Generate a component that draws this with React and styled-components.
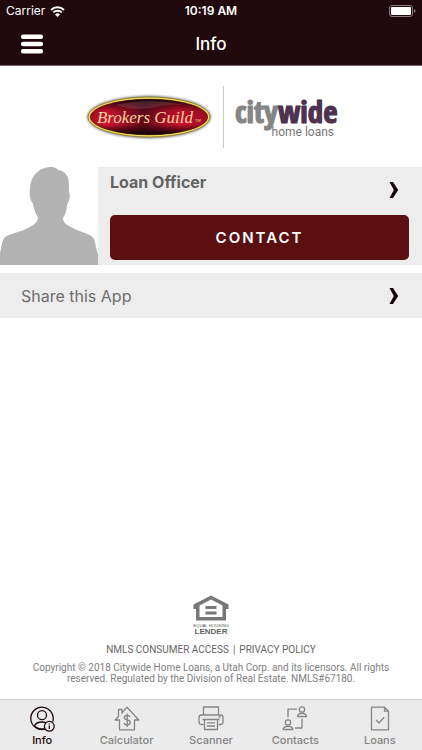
import React from "react";
import styled, { createGlobalStyle } from "styled-components";

const Global = createGlobalStyle`
  *, *::before, *::after { box-sizing: border-box; }
  body {
    margin: 0;
    background: #fff;
    font-family: Inter, "Liberation Sans", sans-serif;
  }
  button { font: inherit; color: inherit; cursor: pointer; }
`;

const Screen = styled.div`
  min-height: 100vh;
  display: flex;
  flex-direction: column;
  background: #fff;
`;

const Header = styled.header`
  background: #20090c;
  color: #fff;
  border-bottom: 1px solid #7b6b6d;
`;

const StatusBar = styled.div`
  display: grid;
  grid-template-columns: 1fr auto 1fr;
  align-items: center;
  height: 22px;
  padding: 0 6px;
  font-size: 12px;
  line-height: 22px;
`;

const Carrier = styled.div`
  display: flex;
  align-items: center;
  gap: 5px;
`;

const Clock = styled.time`
  font-weight: 600;
`;

const Battery = styled.svg`
  justify-self: end;
`;

const NavBar = styled.div`
  display: grid;
  grid-template-columns: 1fr auto 1fr;
  align-items: center;
  height: 43px;
  padding: 0 20px;
`;

const MenuButton = styled.button`
  justify-self: start;
  display: flex;
  padding: 0;
  border: 0;
  background: none;
`;

const Title = styled.h1`
  margin: 0;
  font-size: 17px;
  line-height: 22px;
  font-weight: 500;
`;

const Main = styled.main`
  flex: 1;
  display: flex;
  flex-direction: column;
`;

const Brands = styled.div`
  display: flex;
  justify-content: center;
  align-items: center;
  gap: 10px;
  height: 101px;
`;

const Divider = styled.span`
  width: 1px;
  height: 62px;
  background: #c9c9c9;
`;

const OfficerCard = styled.section`
  display: flex;
  background: #ededed;
`;

const Avatar = styled.svg`
  flex: none;
  display: block;
  background: #fff;
`;

const OfficerBody = styled.div`
  flex: 1;
  display: flex;
  flex-direction: column;
  justify-content: space-between;
  padding: 3px 13px 5px 12px;
`;

const OfficerLink = styled.a`
  display: flex;
  justify-content: space-between;
  padding-right: 10px;
  color: #646464;
  font-size: 16px;
  line-height: 24px;
  font-weight: 700;
  text-decoration: none;
`;

const CardChevron = styled.span`
  display: flex;
  padding-top: 11px;
`;

const ContactButton = styled.button`
  height: 45px;
  border: 0;
  border-radius: 5px;
  background: #5a0f11;
  && {
    color: #fff;
    font-size: 15px;
    font-weight: 600;
    letter-spacing: 2px;
  }
`;

const ShareRow = styled.button`
  display: flex;
  align-items: center;
  justify-content: space-between;
  height: 45px;
  margin-top: 8px;
  padding: 0 23px 0 21px;
  border: 0;
  background: #ededed;
  && {
    color: #6e6e6e;
    font-size: 16px;
  }
`;

const Footer = styled.footer`
  display: flex;
  flex-direction: column;
  align-items: center;
  margin-top: auto;
  padding: 0 24px 15px;
  color: #808080;
  font-family: Roboto, "Liberation Sans", sans-serif;
  text-align: center;
`;

const LegalLinks = styled.nav`
  display: flex;
  gap: 4px;
  margin-top: 6px;
  color: #666;
  font-size: 10px;
  line-height: 16px;
`;

const LegalLink = styled.a`
  color: inherit;
  text-decoration: none;
`;

const Copyright = styled.p`
  margin: 4px 0 0;
  font-size: 10px;
  line-height: 11px;
`;

const TabBar = styled.nav`
  display: grid;
  grid-template-columns: repeat(5, 1fr);
  height: 51px;
  border-top: 1px solid #cfcfcf;
  background: #ebebeb;
`;

const Tab = styled.a`
  display: flex;
  flex-direction: column;
  align-items: center;
  padding-top: 6px;
  color: ${(p) => (p.$active ? "#20090c" : "#858585")};
  font-size: 11px;
  line-height: 16px;
  font-weight: 500;
  text-decoration: none;
`;

const TabIcon = styled.svg`
  display: block;
  fill: none;
  stroke: currentColor;
  stroke-width: 1.3;
  stroke-linejoin: round;
`;

function Chevron() {
  return (
    <svg width="10" height="18" viewBox="0 0 10 18" aria-hidden="true">
      <path d="M0.5 1H4L9.2 9L4 17H0.5L4.8 9Z" fill="#170609" />
    </svg>
  );
}

function Wifi() {
  return (
    <svg width="15" height="11" viewBox="0 0 15 11" aria-label="Wi-Fi">
      <g fill="none" stroke="#fff" strokeWidth="1.9">
        <path d="M1 4A9.2 9.2 0 0 1 14 4" />
        <path d="M3.3 6.4A6 6 0 0 1 11.7 6.4" />
      </g>
      <path d="M7.5 11L5 8.4A3.6 3.6 0 0 1 10 8.4Z" fill="#fff" />
    </svg>
  );
}

function BrokersGuildLogo() {
  return (
    <svg width="128" height="50" viewBox="0 0 128 50" role="img" aria-label="Brokers Guild">
      <defs>
        <linearGradient id="bgRed" x1="0" x2="1" y1="0" y2="0">
          <stop offset="0" stopColor="#a90c22" />
          <stop offset="0.14" stopColor="#d81434" />
          <stop offset="0.46" stopColor="#610817" />
          <stop offset="0.75" stopColor="#d01230" />
          <stop offset="1" stopColor="#a00c20" />
        </linearGradient>
        <linearGradient id="bgShade" x1="0" x2="0" y1="0" y2="1">
          <stop offset="0" stopColor="#160205" stopOpacity="0.95" />
          <stop offset="0.34" stopColor="#160205" stopOpacity="0.1" />
          <stop offset="0.7" stopColor="#160205" stopOpacity="0" />
          <stop offset="0.95" stopColor="#160205" stopOpacity="0.95" />
        </linearGradient>
        <filter id="bgGlow" x="-10%" y="-20%" width="120%" height="140%">
          <feGaussianBlur stdDeviation="1.3" />
        </filter>
      </defs>
      <ellipse cx="64" cy="25" rx="62" ry="21.5" fill="#444" opacity="0.6" filter="url(#bgGlow)" />
      <ellipse cx="64" cy="25" rx="61" ry="20" fill="#f3e25a" stroke="#7d6418" strokeWidth="0.7" />
      <ellipse cx="64" cy="25" rx="58.8" ry="17.8" fill="url(#bgRed)" stroke="#4a2208" strokeWidth="0.6" />
      <ellipse cx="64" cy="25" rx="58.8" ry="17.8" fill="url(#bgShade)" />
      <path d="M31 13Q64 5 98 13Q82 11 66 16Q48 19 31 13Z" fill="#fff" opacity="0.12" />
      <text x="60" y="31" textAnchor="middle" fill="#f5d69d" fontFamily="'Liberation Serif', serif" fontStyle="italic" fontSize="17">
        Brokers Guild
      </text>
      <text x="110" y="30" fill="#f5d69d" fontFamily="'Liberation Sans', sans-serif" fontSize="4">TM</text>
    </svg>
  );
}

function CitywideLogo() {
  return (
    <svg width="104" height="66" viewBox="0 0 104 66" role="img" aria-label="citywide home loans">
      <text x="1" y="39" fontFamily="'Open Sans Condensed', 'Open Sans', sans-serif" fontWeight="700" fontSize="31" fill="#858585" stroke="#858585" strokeWidth="1.2">
        city<tspan fill="#4e3150" stroke="#4e3150">wide</tspan>
      </text>
      <text x="100" y="52" textAnchor="end" fontFamily="Roboto, sans-serif" fontSize="12" fill="#777">
        home loans
      </text>
    </svg>
  );
}

function EqualHousing() {
  return (
    <svg width="38" height="41" viewBox="0 0 38 41" role="img" aria-label="Equal Housing Lender">
      <path fillRule="evenodd" fill="#777" d="M19 0.5L36.5 9.5V14H34V25.5H4V14H1.5V9.5ZM19 4.5L7.5 10.5V22H30.5V10.5Z" />
      <path d="M13.5 11H24.5V14H13.5ZM13.5 16.5H24.5V19.5H13.5Z" fill="#777" />
      <text x="19" y="31.5" textAnchor="middle" fontFamily="'Liberation Sans', sans-serif" fontSize="4.3" fill="#555">EQUAL HOUSING</text>
      <text x="19" y="39" textAnchor="middle" fontFamily="'Liberation Sans', sans-serif" fontWeight="700" fontSize="8" fill="#666">LENDER</text>
    </svg>
  );
}

const icons = {
  info: (
    <>
      <path d="M16 23.2A11.2 11.2 0 1 1 23.7 15.8" />
      <circle cx="13" cy="9.2" r="4.5" />
      <path d="M5.5 20Q7 16 13 16Q15.5 16 17 16.8M5.5 20Q9 23.3 15.5 23" />
      <circle cx="20.3" cy="20.3" r="4.9" />
      <path d="M20.3 19.5V23M20.3 17.4V18.5" />
    </>
  ),
  calculator: (
    <>
      <path d="M5.5 14H1.2L4.5 10.5V3.5H8V7L13 1.2L24.8 14H20.5V23.8H5.5Z" />
      <path d="M16 11Q15.5 9.5 13.2 9.5Q10.3 9.5 10.3 11.6Q10.3 13.5 13.2 13.9Q16.2 14.3 16.2 16.5Q16.2 18.8 13.2 18.8Q10.5 18.8 10.1 17M13.2 7.5V21" />
    </>
  ),
  scanner: (
    <>
      <path d="M5.5 9V1H20.5V9" />
      <path d="M5.5 18.5H3.5Q1 18.5 1 16V11.5Q1 9 3.5 9H22.5Q25 9 25 11.5V16Q25 18.5 22.5 18.5H20.5" />
      <path d="M6.5 13.5H19.5V23.5H6.5ZM4.5 13.5H21.5M9 16.8H17M9 20H17M20.5 11H22.5" />
    </>
  ),
  contacts: (
    <>
      <circle cx="20" cy="3.5" r="2.7" />
      <path d="M15.5 10.5Q15.5 7.3 20 7.3Q24.5 7.3 24.5 10.5Z" />
      <circle cx="6" cy="16.5" r="2.7" />
      <path d="M1.2 23.5Q1.2 20.3 6 20.3Q10.8 20.3 10.8 23.5Z" />
      <path d="M6 11.5V3.2H15M20 12.5V22H13" />
    </>
  ),
  loans: (
    <>
      <path d="M4.5 1.2H17.5L21.5 5.2V23.8H4.5ZM17.5 1.2V5.2H21.5" />
      <path d="M9 14L12 17L17.2 11.2" />
    </>
  ),
};

const tabs = [
  ["info", "Info"],
  ["calculator", "Calculator"],
  ["scanner", "Scanner"],
  ["contacts", "Contacts"],
  ["loans", "Loans"],
];

export default function App() {
  return (
    <Screen>
      <Global />
      <Header>
        <StatusBar>
          <Carrier>Carrier <Wifi /></Carrier>
          <Clock>10:19 AM</Clock>
          <Battery width="27" height="12" viewBox="0 0 27 12" aria-label="Battery full">
            <rect x="0.5" y="0.5" width="23" height="11" rx="2.5" fill="none" stroke="#897b7d" />
            <rect x="2" y="2" width="20" height="8" rx="1" fill="#fff" />
            <path d="M25 4Q26.5 4.5 26.5 6Q26.5 7.5 25 8Z" fill="#897b7d" />
          </Battery>
        </StatusBar>
        <NavBar>
          <MenuButton aria-label="Menu">
            <svg width="24" height="20" viewBox="0 0 24 20" fill="#fff">
              <rect x="1" y="0.5" width="22" height="4.6" rx="2" />
              <rect x="1" y="7.7" width="22" height="4.6" rx="2" />
              <rect x="1" y="14.9" width="22" height="4.6" rx="2" />
            </svg>
          </MenuButton>
          <Title>Info</Title>
        </NavBar>
      </Header>
      <Main>
        <Brands>
          <BrokersGuildLogo />
          <Divider />
          <CitywideLogo />
        </Brands>
        <OfficerCard>
          <Avatar width="98" height="98" viewBox="0 0 98 98" role="img" aria-label="Loan officer">
            <path
              fill="#b3b3b3"
              d="M0 98V86C2 78 2 73 5 70C12 66 25 64 33 58C36 56 38 54 38 50C35 46 34 42 33 37C30 33 29 27 30 22C30 12 36 3 45 1C51 -1 56 0 58 3C66 4 69 10 69 18V25C71 29 69 34 67 38C67 43 65 48 63 51C63 56 67 58 71 60C79 65 91 66 94 72C96 77 96 83 98 87V98Z"
            />
          </Avatar>
          <OfficerBody>
            <OfficerLink href="#officer">
              Loan Officer
              <CardChevron><Chevron /></CardChevron>
            </OfficerLink>
            <ContactButton>CONTACT</ContactButton>
          </OfficerBody>
        </OfficerCard>
        <ShareRow>
          Share this App
          <Chevron />
        </ShareRow>
        <Footer>
          <EqualHousing />
          <LegalLinks aria-label="Legal">
            <LegalLink href="#nmls">NMLS CONSUMER ACCESS</LegalLink>
            <span>|</span>
            <LegalLink href="#privacy">PRIVACY POLICY</LegalLink>
          </LegalLinks>
          <Copyright>
            Copyright © 2018 Citywide Home Loans, a Utah Corp. and its licensors. All rights
            reserved. Regulated by the Division of Real Estate. NMLS#67180.
          </Copyright>
        </Footer>
      </Main>
      <TabBar aria-label="Sections">
        {tabs.map(([id, label], i) => (
          <Tab key={id} href={"#" + id} $active={i === 0}>
            <TabIcon width="26" height="26" viewBox="0 0 26 26" aria-hidden="true">{icons[id]}</TabIcon>
            {label}
          </Tab>
        ))}
      </TabBar>
    </Screen>
  );
}
